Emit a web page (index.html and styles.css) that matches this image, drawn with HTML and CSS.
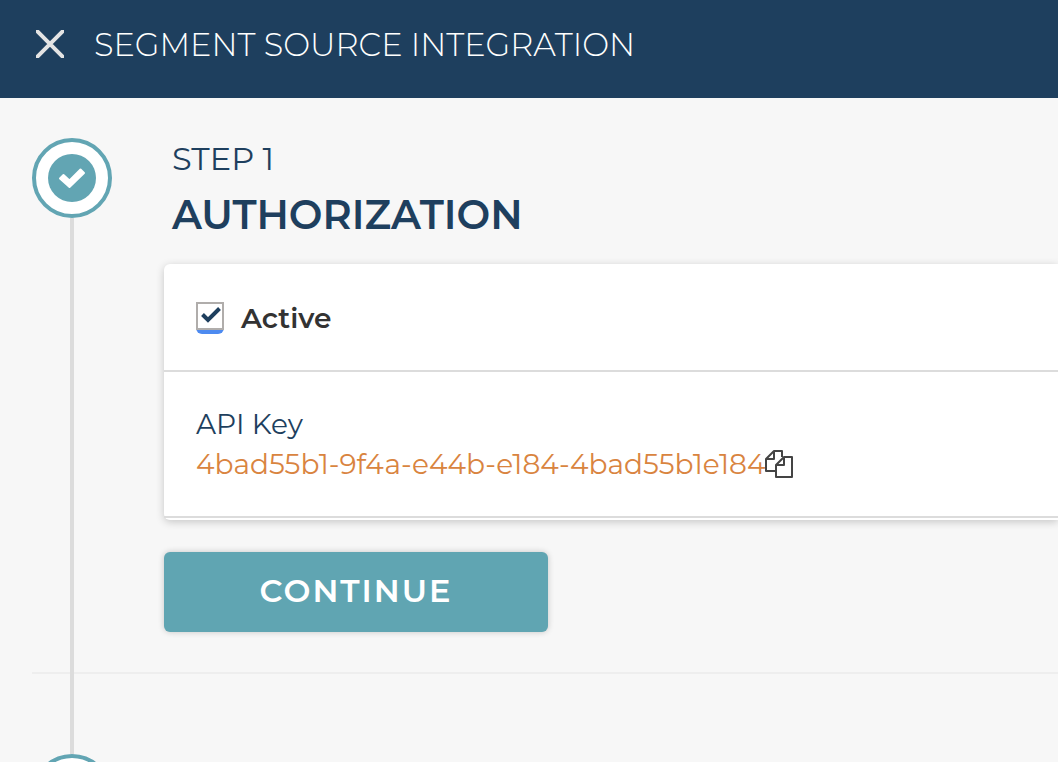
FILE: index.html
```
<!DOCTYPE html>
<html lang="en">
<head>
  <meta charset="UTF-8">
  <meta name="viewport" content="width=device-width, initial-scale=1.0">
  <title>Segment Source Integration</title>
  <link rel="stylesheet" href="styles.css">
</head>
<body>
  <header class="header">
    <button type="button" class="close-btn" aria-label="Close">
      <svg viewBox="0 0 28 28" width="28" height="28">
        <path d="M0 0L28 28M28 0L0 28" stroke="#e4e4e4" stroke-width="4"/>
      </svg>
    </button>
    <h1>SEGMENT SOURCE INTEGRATION</h1>
  </header>

  <main class="steps">
    <section class="step">
      <!-- Completed step marker -->
      <div class="marker">
        <svg class="marker-fill" viewBox="0 0 48 48" width="48" height="48">
          <path d="M12 24.500L15.500 21L21.500 26.500L32.500 15.500L36 19L21.500 33Z" fill="#fff" stroke="#fff" stroke-width="2" stroke-linejoin="round"/>
        </svg>
      </div>
      <div class="step-content">
        <div class="step-title">
          <p class="step-number">STEP 1</p>
          <h2>AUTHORIZATION</h2>
        </div>
        <div class="card">
          <div class="card-row active-row">
            <span class="check-box">
              <input type="checkbox" id="active" checked>
              <svg class="check-icon" viewBox="0 0 28 28" width="28" height="28">
                <path d="M6.500 12.500L12 18L23.500 6.500" fill="none" stroke="#1e3f5e" stroke-width="4"/>
              </svg>
            </span>
            <label for="active">Active</label>
          </div>
          <div class="card-row">
            <p class="key-label">API Key</p>
            <div class="key-line">
              <span class="key-value">4bad55b1-9f4a-e44b-e184-4bad55b1e184</span>
              <button type="button" class="copy-btn" aria-label="Copy API key">
                <svg viewBox="0 0 28 28" width="28" height="28" fill="none" stroke="#444" stroke-width="2" stroke-linejoin="round">
                  <path d="M11 21H1V9L9 1H17V7"/>
                  <path d="M9 1V9H1"/>
                  <path d="M11 27V15L19 7H27V27Z"/>
                  <path d="M19 7V15H11"/>
                </svg>
              </button>
            </div>
          </div>
        </div>
        <button type="button" class="continue-btn">CONTINUE</button>
      </div>
    </section>

    <section class="step">
      <div class="marker"></div>
    </section>
  </main>
</body>
</html>
```
FILE: styles.css
```
* {
  box-sizing: border-box;
}
body {
  margin: 0;
  background-color: #f7f7f7;
  color: #1e3f5e;
  font-family: Montserrat, Inter, sans-serif;
  overflow-x: hidden;
}
h1, h2, p {
  margin: 0;
}
button {
  border: none;
  padding: 0;
  background: none;
  font-family: inherit;
  cursor: pointer;
}
svg {
  display: block;
}
.header {
  display: flex;
  align-items: flex-start;
  gap: 30px;
  padding: 30px 36px 38px;
  background-color: #1e3f5e;
  color: #fff;
}
h1 {
  font-size: 32px;
  line-height: 30px;
  font-weight: 300;
}
.steps {
  padding: 40px 0 0 32px;
}
.step {
  position: relative;
  display: flex;
  gap: 52px;
}
.step + .step {
  margin-top: 80px;
}
.step:not(:last-child) {
  padding-bottom: 40px;
  border-bottom: 2px solid #eee;
}
/* Line joining one marker to the next */
.step:not(:last-child)::before {
  content: "";
  position: absolute;
  top: 80px;
  bottom: -82px;
  left: 38px;
  width: 4px;
  background-color: #dcdcdc;
}
.marker {
  flex: none;
  display: flex;
  justify-content: center;
  align-items: center;
  width: 80px;
  height: 80px;
  border: 4px solid #62a5b3;
  border-radius: 50%;
  background-color: #fff;
}
.marker-fill {
  border-radius: 50%;
  background-color: #62a5b3;
}
.step-content {
  flex: 1;
}
.step-title {
  padding: 0 8px;
}
.step-number {
  font-size: 32px;
  line-height: 42px;
  font-weight: 400;
}
h2 {
  margin-top: 7px;
  font-size: 40px;
  line-height: 56px;
  font-weight: 600;
}
.card {
  margin-top: 21px;
  padding-bottom: 2px;
  border-radius: 6px 0 0 6px;
  background-color: #fff;
  box-shadow: 0 2px 8px rgba(0, 0, 0, 0.2);
}
.card-row {
  padding: 32px;
  border-bottom: 2px solid #dcdcdc;
  font-size: 28px;
  line-height: 40px;
}
.active-row {
  display: flex;
  align-items: center;
  gap: 17px;
  padding-top: 34px;
  color: #333;
  font-weight: 600;
}
.check-box {
  position: relative;
  height: 32px;
  border-radius: 0 0 6px 6px;
  background-color: #4d8af0;
}
.check-box input {
  display: block;
  appearance: none;
  width: 28px;
  height: 28px;
  margin: 0;
  border: 2px solid #b0adab;
  background-color: #fff;
}
.check-icon {
  position: absolute;
  top: 0;
  left: 0;
  display: none;
  pointer-events: none;
}
input:checked + .check-icon {
  display: block;
}
.key-label {
  font-weight: 400;
}
.key-line {
  display: flex;
  align-items: center;
  color: #d9843f;
}
.continue-btn {
  display: block;
  width: 384px;
  height: 80px;
  margin-top: 32px;
  padding-bottom: 4px;
  border-radius: 6px;
  background-color: #60a5b2;
  box-shadow: 0 0 6px rgba(0, 0, 0, 0.2);
  color: #fff;
  font-size: 32px;
  font-weight: 600;
  letter-spacing: 2px;
}
```
